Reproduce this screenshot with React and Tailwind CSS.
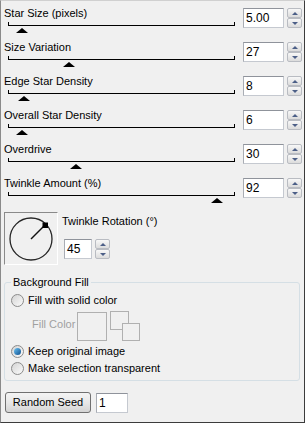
const SLIDERS = [
  { label: 'Star Size (pixels)', value: '5.00', thumb: 22 },
  { label: 'Size Variation', value: '27', thumb: 69 },
  { label: 'Edge Star Density', value: '8', thumb: 24 },
  { label: 'Overall Star Density', value: '6', thumb: 22 },
  { label: 'Overdrive', value: '30', thumb: 76 },
  { label: 'Twinkle Amount (%)', value: '92', thumb: 217 },
]

function Spinner() {
  return (
    <div className="flex flex-col w-[15px] h-[20px]">
      {['up', 'down'].map(dir => (
        <div
          key={dir}
          className="h-[10px] flex items-center justify-center border border-[#b9bcc2] rounded-[2px] bg-gradient-to-b from-[#f8f8f8] to-[#dcdcdc]"
        >
          {dir === 'up' ? (
            <div className="w-0 h-0 border-l-[3px] border-r-[3px] border-b-[3px] border-transparent border-b-[#4c5f87]" />
          ) : (
            <div className="w-0 h-0 border-l-[3px] border-r-[3px] border-t-[3px] border-transparent border-t-[#4c5f87]" />
          )}
        </div>
      ))}
    </div>
  )
}

function TextBox({ value, w }) {
  return (
    <div
      className={`${w} h-[20px] bg-white border border-[#c5c9d0] border-t-[#8f939b] border-l-[#a9adb4] pl-[2px] text-[12px] leading-[18px] text-black`}
    >
      {value}
    </div>
  )
}

function Radio({ checked, label }) {
  return (
    <div className="h-[17px] flex items-center">
      <div className="ml-[6px] w-[13px] h-[13px] rounded-full border border-[#8b8b8b] bg-gradient-to-br from-[#d4d4d4] to-[#fbfbfb] flex items-center justify-center">
        {checked && <div className="w-[7px] h-[7px] rounded-full bg-gradient-to-br from-[#6bc3f3] to-[#0b4f8e]" />}
      </div>
      <span className="ml-[4px]">{label}</span>
    </div>
  )
}

export default function App() {
  return (
    <div className="w-[305px] h-[423px] bg-[#f0f0f0] border border-t-[#d0d0d0] border-l-[#8a8a8a] border-r-[#3c3c3c] border-b-[#3c3c3c] font-['Liberation_Sans',Arial,sans-serif] text-[11px] leading-[13px] text-black overflow-hidden">
      {SLIDERS.map(s => (
        <div key={s.label} className="h-[34px] flex">
          <div className="w-[242px]">
            <div className="pl-[3px] pt-[6px] h-[19px] whitespace-nowrap">{s.label}</div>
            <div className="mt-[2px] ml-[7px] w-[227px] h-[4px] border-l border-r border-b border-black" />
            <div
              className="mt-[2px] w-0 h-0 border-l-[6px] border-r-[6px] border-b-[5px] border-transparent border-b-black"
              style={{ marginLeft: s.thumb - 7 }}
            />
          </div>
          <div className="mt-[7px] flex gap-[3px]">
            <TextBox value={s.value} w="w-[41px]" />
            <Spinner />
          </div>
        </div>
      ))}

      {/* rotation dial */}
      <div className="mt-[7px] flex">
        <div className="ml-[3px] w-[54px] h-[53px] border border-t-[#8a8a8a] border-l-[#8a8a8a] border-r-white border-b-white">
          <svg width="52" height="51" viewBox="0 0 52 51">
            <circle cx="26" cy="26" r="21" fill="none" stroke="#262626" strokeWidth="1.3" />
            <line x1="26" y1="26" x2="40" y2="12" stroke="#111" strokeWidth="1.4" />
            <rect x="37.5" y="9.5" width="5.5" height="5.5" fill="#000" />
          </svg>
        </div>
        <div className="ml-[4px] pt-[3px]">
          <div className="h-[13px] whitespace-nowrap">Twinkle Rotation (°)</div>
          <div className="mt-[11px] ml-[2px] flex gap-[3px]">
            <TextBox value="45" w="w-[28px]" />
            <Spinner />
          </div>
        </div>
      </div>

      {/* background fill group */}
      <div className="relative mt-[17px] ml-[3px] w-[296px] h-[99px] border border-[#d5dfe5] rounded-[3px]">
        <span className="absolute -top-[7px] left-[6px] px-[2px] bg-[#f0f0f0]">Background Fill</span>
        <div className="pt-[9px]">
          <Radio label="Fill with solid color" />
          <div className="mt-[2px] h-[30px] flex items-center text-[#a0a0a0]">
            <span className="ml-[27px] w-[45px] -mt-[3px]">Fill Color</span>
            <div className="mt-[1px] w-[30px] h-[29px] border border-[#b0b0b0]" />
            <div className="relative ml-[3px] w-[30px] h-[30px]">
              <div className="absolute left-0 top-0 w-[19px] h-[19px] border border-[#b0b0b0]" />
              <div className="absolute left-[12px] top-[12px] w-[18px] h-[18px] border border-[#b0b0b0] bg-[#f0f0f0]" />
            </div>
          </div>
          <div className="mt-[2px]">
            <Radio checked label="Keep original image" />
            <Radio label="Make selection transparent" />
          </div>
        </div>
      </div>

      {/* seed */}
      <div className="mt-[11px] ml-[4px] flex items-center gap-[5px]">
        <button className="w-[86px] h-[21px] rounded-[3px] border border-[#707070] bg-gradient-to-b from-[#f4f4f4] via-[#e8e8e8] to-[#d4d4d4] text-[11px] leading-[13px] text-black">
          Random Seed
        </button>
        <TextBox value="1" w="w-[32px]" />
      </div>
    </div>
  )
}
